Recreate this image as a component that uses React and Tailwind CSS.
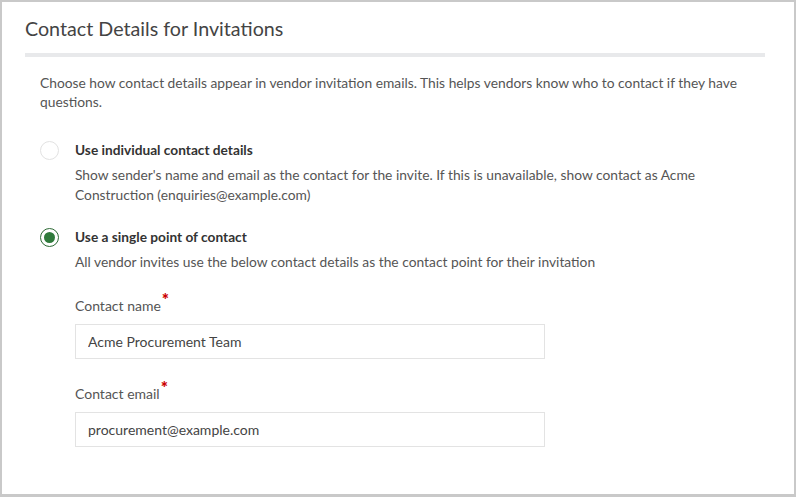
import React, { useState } from 'react'

const Radio = ({ checked }) => (
  <span
    className={`flex h-[19px] w-[19px] shrink-0 items-center justify-center rounded-full bg-white ${
      checked ? 'border-[1.5px] border-[#2d6a35]' : 'border border-[#e2e2e2]'
    }`}
  >
    {checked && <span className="h-[11px] w-[11px] rounded-full bg-[#2f7a3b]" />}
  </span>
)

const Field = ({ label, value, onChange }) => (
  <div>
    <label className="block text-[14px] leading-[20px] text-[#555]">
      {label}
      <span className="relative top-[-5px] ml-[1px] text-[17px] font-black leading-none text-[#cc0000]">*</span>
    </label>
    <input
      value={value}
      onChange={(e) => onChange(e.target.value)}
      className="mt-[8px] h-[35px] w-[470px] border border-[#e3e3e3] px-[12px] text-[14px] text-[#444] outline-none"
    />
  </div>
)

export default function App() {
  const [mode, setMode] = useState('single')
  const [name, setName] = useState('Acme Procurement Team')
  const [email, setEmail] = useState('procurement@example.com')

  const options = [
    {
      id: 'individual',
      title: 'Use individual contact details',
      text: "Show sender's name and email as the contact for the invite. If this is unavailable, show contact as Acme Construction (enquiries@example.com)"
    },
    {
      id: 'single',
      title: 'Use a single point of contact',
      text: 'All vendor invites use the below contact details as the contact point for their invitation'
    }
  ]

  return (
    <div
      className="h-[497px] w-[796px] border-2 border-b-[3px] border-[#c9c9c9] bg-white pl-[23px] pr-[29px] pt-[15px]"
      style={{ fontFamily: 'Lato, "Noto Sans", sans-serif' }}
    >
      <h2 className="text-[19.7px] leading-[24px] text-[#444]">Contact Details for Invitations</h2>
      <div className="mt-[12px] h-[4px] bg-[#e8e9eb]" />

      <div className="pl-[15px] pt-[16px]">
        <p className="pr-[10px] text-[13.8px] leading-[19px] text-[#555]">
          Choose how contact details appear in vendor invitation emails. This helps vendors know who to contact if they have
          questions.
        </p>

        <div className="mt-[29px] flex flex-col gap-[22px]">
          {options.map((o) => (
            <div key={o.id} className="flex cursor-pointer gap-[16px]" onClick={() => setMode(o.id)}>
              <div className="pt-[0.5px]">
                <Radio checked={mode === o.id} />
              </div>
              <div className="pr-[40px]">
                <div className="text-[13.7px] font-bold leading-[20px] text-[#333]">{o.title}</div>
                <p className="mt-[5px] text-[13.8px] leading-[20px] text-[#555]">{o.text}</p>
              </div>
            </div>
          ))}
        </div>

        {mode === 'single' && (
          <div className="mt-[24px] flex flex-col gap-[25px] pl-[35px]">
            <Field label="Contact name" value={name} onChange={setName} />
            <Field label="Contact email" value={email} onChange={setEmail} />
          </div>
        )}
      </div>
    </div>
  )
}
